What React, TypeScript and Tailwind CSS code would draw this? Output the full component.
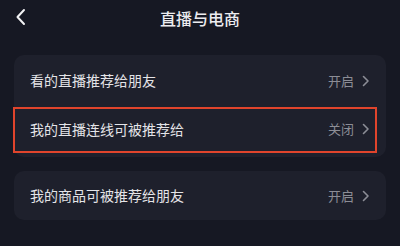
const font = { fontFamily: '"Noto Sans CJK SC", "Noto Sans", sans-serif' };

function Chevron() {
  return (
    <svg width="8" height="12" viewBox="0 0 8 12" className="ml-[8px]">
      <path d="M1.5 1.5 L6 6 L1.5 10.5" fill="none" stroke="#8c8d96" strokeWidth="1.6" strokeLinecap="round" strokeLinejoin="round" />
    </svg>
  );
}

function Row({ label, value, className = "" }: { label: string; value: string; className?: string }) {
  return (
    <div className={`flex items-center justify-between pl-[16px] pr-[16px] ${className}`}>
      <span className="text-[14px] text-[#e4e4e8]">{label}</span>
      <span className="flex items-center text-[13px] text-[#8c8d96]">
        {value}
        <Chevron />
      </span>
    </div>
  );
}

export default function App() {
  return (
    <div className="w-[400px] h-[246px] bg-[#161823] overflow-hidden" style={font}>
      <div className="relative flex items-center justify-center h-[34px]">
        <svg width="14" height="18" viewBox="0 0 14 18" className="absolute left-[14px] top-[8px]">
          <path d="M10 2 L3.5 9 L10 16" fill="none" stroke="#f2f2f4" strokeWidth="2" strokeLinecap="round" strokeLinejoin="round" />
        </svg>
        <span className="text-[16px] font-medium text-[#ececf0] mt-[1px]">直播与电商</span>
      </div>

      <div className="mt-[21px] mx-[14px] rounded-[10px] bg-[#1e202c] pb-[5px]">
        <Row label="看的直播推荐给朋友" value="开启" className="h-[51px]" />
        <div className="relative">
          <Row label="我的直播连线可被推荐给" value="关闭" className="h-[46px]" />
          <div className="absolute left-[-1px] right-[9px] top-[1px] bottom-[-1px] border-2 border-[#e0442c]" />
        </div>
      </div>

      <div className="mt-[14px] mx-[14px] rounded-[10px] bg-[#1e202c]">
        <Row label="我的商品可被推荐给朋友" value="开启" className="h-[49px]" />
      </div>
    </div>
  );
}
